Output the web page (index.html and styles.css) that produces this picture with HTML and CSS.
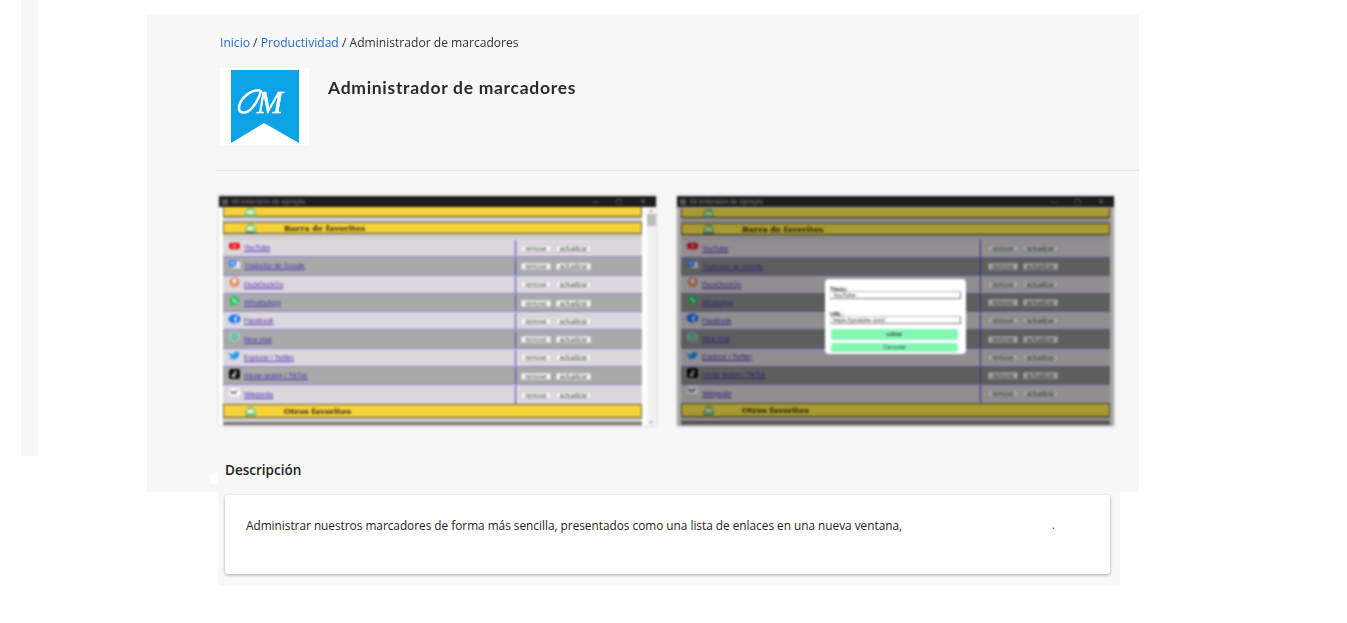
FILE: index.html
```html
<!DOCTYPE html>
<html lang="es">
<head>
<meta charset="utf-8">
<title>Administrador de marcadores</title>
<link rel="stylesheet" href="styles.css">
</head>
<body>
<svg class="defs" width="0" height="0" aria-hidden="true">
  <symbol id="i-folder" viewBox="0 0 14 11"><path d="M1 10V5h2V2q4-3 8 0l1 3h1v5z" fill="#7cc47f"/><path d="M1 10h12v1H1z" fill="#3f8a55"/><path d="M3 5q4-3 8 0v3H3z" fill="#e6f3c4"/></symbol>
  <symbol id="i-yt" viewBox="0 0 14 10"><rect x="1" y="1" width="12" height="7" rx="2.4" fill="#ec1c24"/><path d="M6 3l3 1.5L6 6z" fill="#fff"/></symbol>
  <symbol id="i-tr" viewBox="0 0 14 12"><rect x="6" y="3" width="7" height="7" fill="#eef"/><rect x="1" y="1" width="8" height="7" rx="1" fill="#4a86e8"/><path d="M3 4h4M5 3v3" stroke="#dce8fb"/></symbol>
  <symbol id="i-dd" viewBox="0 0 14 12"><circle cx="7" cy="5.5" r="5.2" fill="#de7a50"/><ellipse cx="7" cy="5" rx="2.6" ry="3.6" fill="#f6e9dc"/><path d="M6 6h2l-.5 4h-1z" fill="#e0a030"/></symbol>
  <symbol id="i-wa" viewBox="0 0 14 12"><circle cx="7" cy="5" r="5" fill="#25c264"/><path d="M2 11l1.400-3 2 1.800z" fill="#25c264"/><path d="M5 3q0 4 4.500 4.500L10 6 8.500 5.500 8 6Q6.800 5.500 6.500 4.300L7 3.800 6 2.500z" fill="#fff"/></symbol>
  <symbol id="i-fb" viewBox="0 0 14 12"><ellipse cx="7" cy="5.500" rx="6.500" ry="5" fill="#1877f2"/><path d="M7.500 10V6H6V4.500h1.500Q7.500 2.500 9.500 2.500V4Q8.800 4 8.800 4.800h.9L9.400 6h-.6v4z" fill="#fff"/></symbol>
  <symbol id="i-ch" viewBox="0 0 14 12"><rect x="1" y="0" width="12" height="10" rx="4" fill="#8ecdb6"/><circle cx="7" cy="5" r="2.600" fill="none" stroke="#4f9a85"/></symbol>
  <symbol id="i-tw" viewBox="0 0 14 12"><path d="M0 3q3 2 6 2 0-3 3-3 1.500 0 2 1l2-.6-1 1.600q0 5-5.500 6Q3 10.500 1 8.500q2 0 3-1Q1.500 6.500 0 3z" fill="#1d9bf0"/></symbol>
  <symbol id="i-tk" viewBox="0 0 14 12"><rect x="1" y="0" width="12" height="11" rx="2.500" fill="#0a0a0a"/><path d="M7.500 2.200v5a1.400 1.400 0 1 1-1.400-1.400" fill="none" stroke="#fff" stroke-width="1.300"/><path d="M7.800 2.500q.8 1.700 2.400 1.800" fill="none" stroke="#f5c0d0" stroke-width="1"/></symbol>
  <symbol id="i-wk" viewBox="0 0 14 12"><rect x="1" y="0" width="12" height="9" rx="2" fill="#fff"/><path d="M2.500 2.500l2 4 1.500-3 1.500 3 2.500-4.500" fill="none" stroke="#333"/></symbol>
</svg>

<div class="page">
  <aside class="strip"></aside>
  <div class="content">
    <main class="panel">
      <nav class="crumbs"><a href="#">Inicio</a> / <a href="#">Productividad</a> / Administrador de marcadores</nav>
      <header class="head">
        <div class="logo">
          <svg width="68" height="73" viewBox="0 0 68 73">
            <path d="M0 0h68v73L33 53 0 73z" fill="#0ca2e6"/>
            <path class="logo-curl" d="M29 20C18 20 8 30 8 38C8 44 16 44 21 38C26 32 29 26 30 20"/>
            <text class="logo-m" x="26" y="43">M</text>
          </svg>
        </div>
        <h1>Administrador de marcadores</h1>
      </header>
      <hr class="rule">
      <section class="shots">
        <figure class="shot">
          <div class="winbar"><span class="winicon"></span><span class="wintitle">Mi extensión de ejemplo</span><span class="winbtns"><i>—</i><i>▢</i><i>✕</i></span></div>
          <div class="winbody">
            <div class="sheet">
              <div class="band band-cut"><svg class="fold"><use href="#i-folder"/></svg></div>
              <div class="band"><svg class="fold"><use href="#i-folder"/></svg><b>Barra de favoritos</b></div>
              <div class="rows">
                <div class="row"><svg class="ico"><use href="#i-yt"/></svg><a class="lnk">YouTube</a><div class="acts"><button>remove</button><button>actualizar</button></div></div>
                <div class="row"><svg class="ico"><use href="#i-tr"/></svg><a class="lnk">Traductor de Google</a><div class="acts"><button>remove</button><button>actualizar</button></div></div>
                <div class="row"><svg class="ico"><use href="#i-dd"/></svg><a class="lnk">DuckDuckGo</a><div class="acts"><button>remove</button><button>actualizar</button></div></div>
                <div class="row"><svg class="ico"><use href="#i-wa"/></svg><a class="lnk lnk-big">WhatsApp</a><div class="acts"><button>remove</button><button>actualizar</button></div></div>
                <div class="row"><svg class="ico"><use href="#i-fb"/></svg><a class="lnk">Facebook</a><div class="acts"><button>remove</button><button>actualizar</button></div></div>
                <div class="row"><svg class="ico"><use href="#i-ch"/></svg><a class="lnk">New chat</a><div class="acts"><button>remove</button><button>actualizar</button></div></div>
                <div class="row"><svg class="ico"><use href="#i-tw"/></svg><a class="lnk">Explorar / Twitter</a><div class="acts"><button>remove</button><button>actualizar</button></div></div>
                <div class="row"><svg class="ico"><use href="#i-tk"/></svg><a class="lnk">Iniciar sesión | TikTok</a><div class="acts"><button>remove</button><button>actualizar</button></div></div>
                <div class="row"><svg class="ico"><use href="#i-wk"/></svg><a class="lnk">Wikipedia</a><div class="acts"><button>remove</button><button>actualizar</button></div></div>
              </div>
              <div class="band band-end"><svg class="fold"><use href="#i-folder"/></svg><b>Otros favoritos</b></div>
              <div class="tail"></div>
            </div>
            <div class="scroll"><span class="arrow">▴</span><span class="thumb"></span><span class="arrow arrow-end">▾</span></div>
          </div>
        </figure>

        <figure class="shot shot-modal">
          <div class="winbar"><span class="winicon"></span><span class="wintitle">Mi extensión de ejemplo</span><span class="winbtns"><i>—</i><i>▢</i><i>✕</i></span></div>
          <div class="winbody">
            <div class="sheet">
              <div class="band band-cut"><svg class="fold"><use href="#i-folder"/></svg></div>
              <div class="band"><svg class="fold"><use href="#i-folder"/></svg><b>Barra de favoritos</b></div>
              <div class="rows">
                <div class="row"><svg class="ico"><use href="#i-yt"/></svg><a class="lnk">YouTube</a><div class="acts"><button>remove</button><button>actualizar</button></div></div>
                <div class="row"><svg class="ico"><use href="#i-tr"/></svg><a class="lnk">Traductor de Google</a><div class="acts"><button>remove</button><button>actualizar</button></div></div>
                <div class="row"><svg class="ico"><use href="#i-dd"/></svg><a class="lnk">DuckDuckGo</a><div class="acts"><button>remove</button><button>actualizar</button></div></div>
                <div class="row"><svg class="ico"><use href="#i-wa"/></svg><a class="lnk">WhatsApp</a><div class="acts"><button>remove</button><button>actualizar</button></div></div>
                <div class="row"><svg class="ico"><use href="#i-fb"/></svg><a class="lnk">Facebook</a><div class="acts"><button>remove</button><button>actualizar</button></div></div>
                <div class="row"><svg class="ico"><use href="#i-ch"/></svg><a class="lnk">New chat</a><div class="acts"><button>remove</button><button>actualizar</button></div></div>
                <div class="row"><svg class="ico"><use href="#i-tw"/></svg><a class="lnk">Explorar / Twitter</a><div class="acts"><button>remove</button><button>actualizar</button></div></div>
                <div class="row"><svg class="ico"><use href="#i-tk"/></svg><a class="lnk">Iniciar sesión | TikTok</a><div class="acts"><button>remove</button><button>actualizar</button></div></div>
                <div class="row"><svg class="ico"><use href="#i-wk"/></svg><a class="lnk">Wikipedia</a><div class="acts"><button>remove</button><button>actualizar</button></div></div>
              </div>
              <div class="band band-end"><svg class="fold"><use href="#i-folder"/></svg><b>Otros favoritos</b></div>
              <div class="tail"></div>
            </div>
            <div class="overlay">
              <div class="modal">
                <label>Título:</label>
                <span class="field">YouTube</span>
                <label class="second">URL:</label>
                <span class="field">https://youtube.com/</span>
                <span class="mint mint-first">editar</span>
                <span class="mint">Cancelar</span>
              </div>
            </div>
          </div>
        </figure>
      </section>
      <h2>Descripción</h2>
    </main>
    <section class="lower">
      <div class="card">
        <p>Administrar nuestros marcadores de forma más sencilla, presentados como una lista de enlaces en una nueva ventana,</p>
        <span class="dot">.</span>
      </div>
    </section>
  </div>
</div>
</body>
</html>
```

FILE: styles.css
```css
* { box-sizing: border-box; }
html, body { margin: 0; padding: 0; background: #fff; overflow: hidden; }
body { font-family: "Open Sans", "Liberation Sans", sans-serif; color: #222; }
.defs { display: block; height: 0; }

.page { display: flex; align-items: flex-start; height: 623px; }
.strip { width: 17px; height: 456px; margin-left: 21px; background: #f7f7f7; flex: none; }
.content { width: 992px; margin: 15px 0 0 109px; flex: none; }

.panel { position: relative; height: 477px; background: #f7f7f7; padding-top: 20px; }
.panel::after { content: ""; position: absolute; left: 62px; top: 457px; width: 9px; height: 12px; background: #fff; border-top-left-radius: 9px; }

.crumbs { margin-left: 73px; height: 16px; font: 400 12.100px/16px "Open Sans", sans-serif; color: #333; white-space: nowrap; filter: blur(.4px); }
.crumbs a { color: #2b6cc4; text-decoration: none; }

.head { display: flex; margin: 17px 0 0 73px; height: 77px; }
.logo { width: 89px; height: 77px; background: #fff; display: flex; justify-content: center; padding-top: 2px; flex: none; filter: blur(.4px); }
.logo-m { font: italic 400 31px "Liberation Serif", serif; fill: #fff; stroke: #fff; stroke-width: .5px; }
.logo-curl { fill: none; stroke: #fff; stroke-width: 2.500px; }
h1 { margin: 9px 0 0 19px; font: 700 17.500px/22px "Lato", sans-serif; color: #2a2a2a; letter-spacing: .7px; white-space: nowrap; filter: blur(.4px); }

.rule { margin: 25px 0 0 68px; border: 0; height: 1px; background: #e6e6e6; }

.shots { display: flex; gap: 21px; margin: 24px 0 0 72px; }
.shot { margin: 0; width: 437px; height: 231px; padding-top: 1px; display: flex; flex-direction: column; overflow: hidden; background: #fff; box-shadow: 0 0 3px rgba(0,0,0,.18); filter: blur(.9px); }

.winbar { height: 11px; flex: none; background: #1d1d1d; display: flex; align-items: center; padding: 0 4px 0 3px; color: #7d7d7d; font: 400 6.800px/11px "Liberation Sans", sans-serif; }
.winicon { width: 6px; height: 6px; background: #555; margin-right: 4px; }
.winbtns { margin-left: auto; display: flex; gap: 17px; padding-right: 6px; }
.winbtns i { font-style: normal; }

.winbody { position: relative; flex: 1; display: flex; background: #fff; min-height: 0; }
.sheet { flex: 1; padding: 0 14px 0 4px; background: #d3cdd1; background-clip: content-box; min-width: 0; }
.shot-modal .sheet { padding: 1px 4px 0 4px; }
.scroll { width: 9px; flex: none; margin-left: -9px; background: #f1f1f1; display: flex; flex-direction: column; align-items: center; color: #777; font: 400 5px/7px "Liberation Sans", sans-serif; }
.thumb { width: 9px; height: 12px; background: #bdbdbd; }
.arrow-end { margin-top: auto; }

.band { height: 12px; margin-top: 5px; background: #f6d13a; border: 1px solid #6b6238; border-bottom-color: #4f4726; display: flex; align-items: center; font: 700 8px/10px "DejaVu Serif", serif; color: #2b2310; white-space: nowrap; }
.band b { margin-left: 27px; }
.band-cut { height: 10px; margin-top: 0; border-top: 0; }
.band-end { height: 14px; margin-top: 0; }
.fold { width: 13px; height: 10px; margin-left: 20px; flex: none; }
.tail { height: 3px; margin-top: 4px; background: #7d787e; }

.rows { margin-top: 5px; background: #dcd6dd; }
.row { height: 18.300px; display: flex; align-items: center; background: #dcd6dd; border-bottom: 1px solid #8f86d6; padding: 1px 0 0 5px; }
.row:nth-child(even) { background: #a9a9a9; }
.row:last-child { border-bottom: 0; }
.ico { width: 13px; height: 11px; flex: none; margin-top: -4px; }
.lnk { margin-left: 3px; font: 400 6.700px/8px "Liberation Sans", sans-serif; color: #4a2fb0; text-decoration: underline; white-space: nowrap; }
.lnk-big { font-size: 8px; }
.acts { margin-left: auto; width: 127px; height: 100%; border-left: 1px solid #4c3fc0; display: flex; align-items: center; gap: 5px; padding-left: 5px; flex: none; }
.acts button { height: 7px; padding: 0; background: #fbfbfb; border: 1px solid #cfcfcf; font: 400 6.500px/5px "Liberation Sans", sans-serif; color: #333; }
.acts button:first-child { width: 30px; }
.acts button:last-child { width: 35px; }

.shot-modal .acts { width: 130px; padding-left: 7px; }
.shot-modal .band { background: #ffe94a; }
.shot-modal .row { height: 18.100px; padding-top: 0; }
.shot-modal .row:nth-child(even) { background: #8f8f8f; }

.overlay { position: absolute; inset: 0; background: rgba(0,0,0,.34); display: flex; align-items: center; justify-content: center; }
.modal { width: 141px; height: 75px; background: #fff; border-radius: 4px; padding: 8px 5px 0; display: flex; flex-direction: column; font: 400 5.800px/6px "Liberation Sans", sans-serif; color: #222; }
.modal label { font-weight: 700; height: 4px; line-height: 4px; }
.modal .second { margin-top: 13px; }
.field { height: 8px; border: 1px solid #777; border-top-color: #bbb; border-left-color: #ddd; padding-left: 2px; line-height: 6px; white-space: nowrap; }
.mint { display: block; width: 127px; height: 9px; margin: 3px 0 0 1px; background: #85f7b5; border-radius: 2px; text-align: center; line-height: 9px; color: #245; }
.mint-first { height: 11px; margin-top: 5px; line-height: 11px; font-weight: 700; }

h2 { margin: 35px 0 0 78px; font: 600 13.500px/18px "Open Sans", sans-serif; color: #222; }

.lower { width: 902px; height: 94px; margin-left: 71px; padding: 3px 10px 0 7px; background: #f8f8f8; }
.card { height: 79px; background: #fff; border-radius: 3px; box-shadow: 0 1px 3px rgba(0,0,0,.35); padding: 21px 0 0 21px; display: flex; align-items: flex-start; }
.card p { margin: 0; font: 400 11.800px/18px "Open Sans", sans-serif; color: #1d1d1d; white-space: nowrap; }
.dot { margin-left: 150px; font: 400 10px/18px "Open Sans", sans-serif; }
```
